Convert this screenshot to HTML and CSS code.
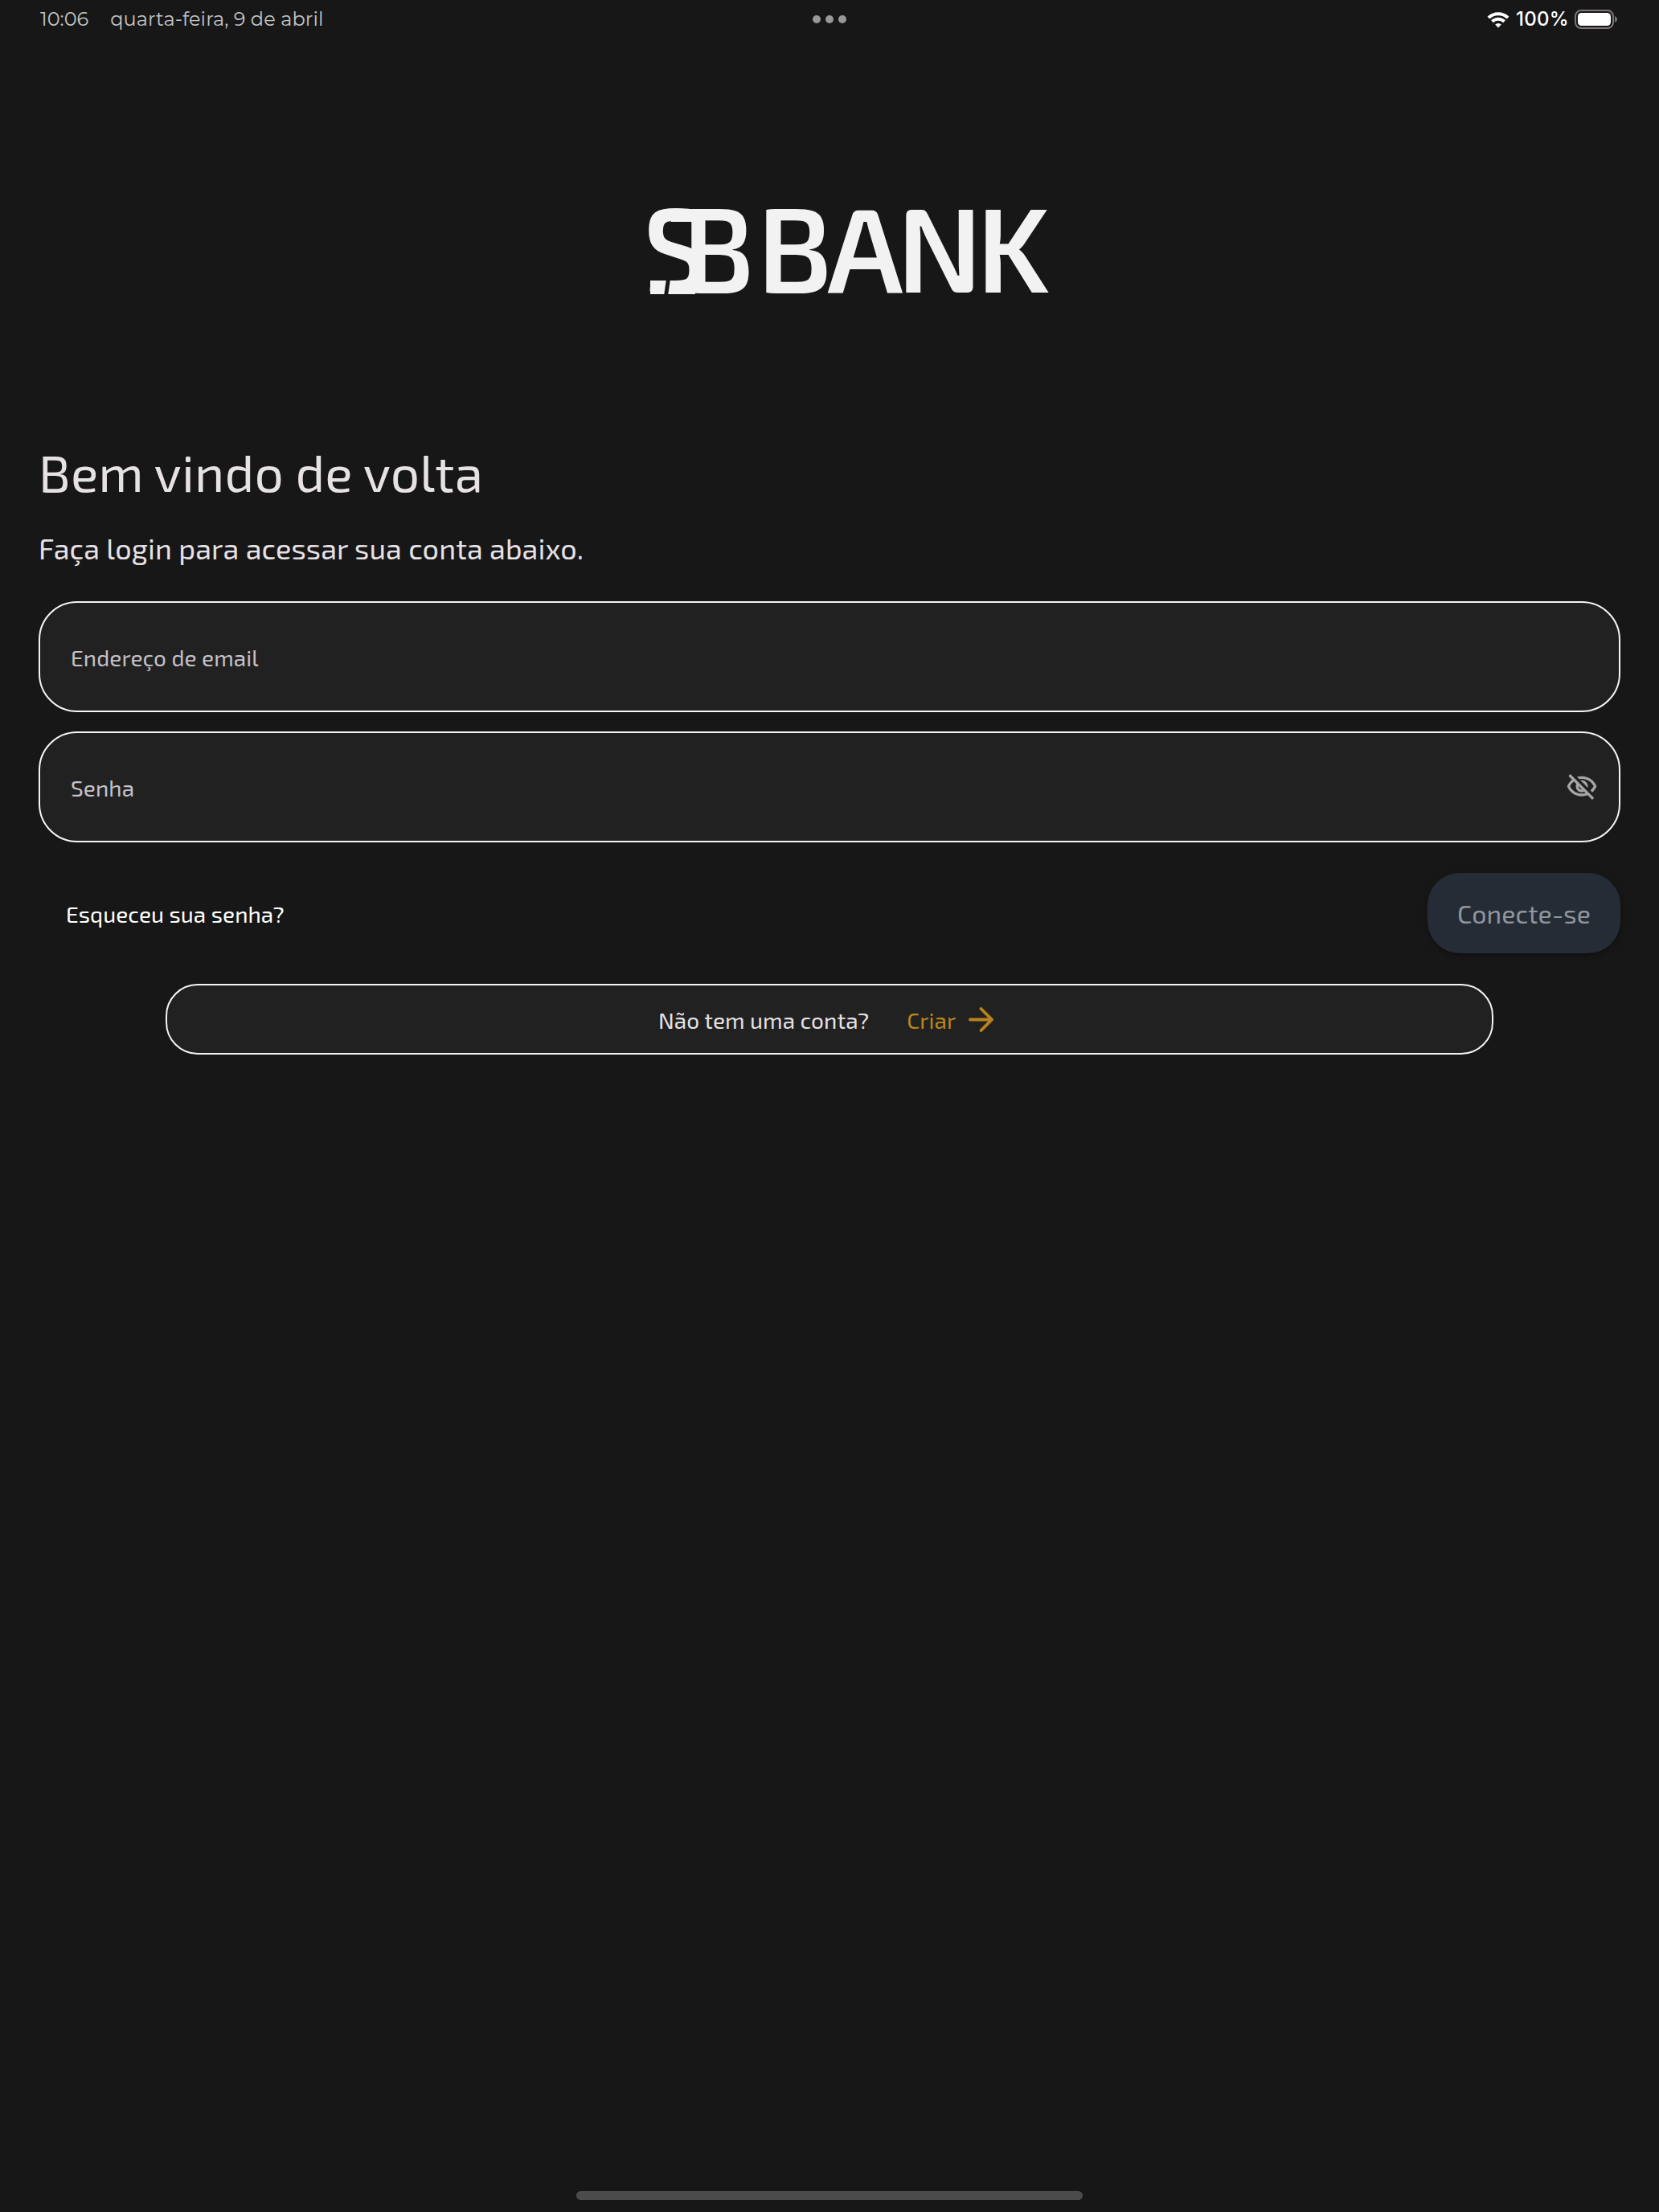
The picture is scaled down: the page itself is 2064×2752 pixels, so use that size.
FILE: index.html
```html
<!DOCTYPE html>
<html lang="pt-BR">
<head>
  <meta charset="utf-8">
  <meta name="viewport" content="width=device-width,initial-scale=1.0">
  <title>SB Bank</title>
  <link rel="stylesheet" href="styles.css">
</head>
<body>
  <header class="status-bar">
    <div class="status-left">
      <span class="time">10:06</span>
      <span class="date">quarta-feira, 9 de abril</span>
    </div>
    <div class="dots"><i></i><i></i><i></i></div>
    <div class="status-right">
      <svg class="wifi" width="28" height="21" viewBox="0 0 28 21" fill="none" stroke="#fff" stroke-width="4">
        <path d="M1.9 8.2a17.2 17.2 0 0 1 24.2 0" />
        <path d="M6.5 12.8a10.8 10.8 0 0 1 15 0" />
        <path d="M14 20.4l-3.8-3.9a5.4 5.4 0 0 1 7.6 0z" fill="#fff" stroke="none" />
      </svg>
      <span class="percent">100%</span>
      <svg width="54" height="24" viewBox="0 0 54 24">
        <rect x="1" y="1" width="47" height="22" rx="7" fill="none" stroke="#7d7474" stroke-width="2" />
        <rect x="4" y="4" width="41" height="16" rx="4.5" fill="#fff" />
        <path d="M50 8c4 1.500 4 6.500 0 8z" fill="#7d7474" />
      </svg>
    </div>
  </header>

  <main class="login">
    <svg class="logo" width="500" height="112" viewBox="806 258 500 112">
      <text class="logo-text" transform="translate(800.600 364) scale(.95 1)" x="0 51.500">SB</text>
      <!-- flat foot under the S, cut by a slash -->
      <rect class="foot" x="809" y="349" width="56" height="17" />
      <rect class="foot" x="835" y="260" width="40" height="16" />
      <path class="cut" d="M829 347h5l-3 21h-5z" />
      <text class="logo-text" x="942 1029 1116 1215" y="364">BANK</text>
    </svg>

    <h1>Bem vindo de volta</h1>
    <p class="subtitle">Faça login para acessar sua conta abaixo.</p>

    <form class="login-form">
      <div class="field">
        <input type="email" placeholder="Endereço de email">
      </div>
      <div class="field">
        <input type="password" placeholder="Senha">
        <svg class="eye" width="40" height="40" viewBox="0 0 24 24" fill="#a6a6a6">
          <path d="M12 6c3.790 0 7.170 2.130 8.820 5.500-.590 1.220-1.420 2.270-2.410 3.120l1.410 1.410c1.390-1.230 2.490-2.770 3.180-4.530C21.270 7.110 17 4 12 4c-1.270 0-2.490.2-3.640.57l1.650 1.650C10.660 6.090 11.320 6 12 6zm-1.070 1.140L13 9.210c.57.25 1.030.71 1.280 1.280l2.070 2.070c.08-.34.14-.7.14-1.070C16.500 9.010 14.480 7 12 7c-.37 0-.72.05-1.070.14zM2.010 3.870l2.680 2.680C3.060 7.830 1.770 9.530 1 11.500 2.730 15.890 7 19 12 19c1.520 0 2.980-.29 4.320-.82l3.420 3.420 1.410-1.410L3.420 2.450 2.010 3.870zm7.500 7.500l2.610 2.610c-.04.01-.08.02-.12.02-1.380 0-2.500-1.120-2.500-2.500 0-.05.01-.08.01-.13zm-3.400-3.400l1.750 1.750c-.23.55-.36 1.150-.36 1.780 0 2.480 2.020 4.500 4.500 4.500.63 0 1.230-.13 1.770-.36l.98.98c-.88.24-1.800.38-2.750.38-3.790 0-7.170-2.130-8.820-5.500.7-1.430 1.720-2.610 2.930-3.530z" />
        </svg>
      </div>
      <div class="actions">
        <a class="forgot">Esqueceu sua senha?</a>
        <button type="button" class="login-btn">Conecte-se</button>
      </div>
    </form>

    <div class="signup">
      <span class="question">Não tem uma conta?</span>
      <a class="create">Criar</a>
      <svg width="31" height="31" viewBox="0 0 31 31" fill="none" stroke="#b9831c" stroke-width="3.800" stroke-linecap="round" stroke-linejoin="round">
        <path d="M2 15.500h26.500M15.500 2l13.500 13.500L15.500 29" />
      </svg>
    </div>
  </main>

  <div class="home-bar"></div>
</body>
</html>
```
FILE: styles.css
```css
* {
  box-sizing: border-box;
}

body {
  margin: 0;
  min-height: 2752px;
  display: flex;
  flex-direction: column;
  background: #171717;
  color: #e6e1e5;
  font-family: "Exo 2", "Noto Sans", sans-serif;
}

.status-bar {
  display: grid;
  grid-template-columns: 1fr auto 1fr;
  align-items: center;
  height: 48px;
  padding: 0 51px 0 50px;
  font-family: "Montserrat", Inter, sans-serif;
  font-size: 24px;
  line-height: 46px;
  color: #c4c4c4;
}

.status-left {
  display: flex;
  gap: 27px;
  padding-bottom: 1px;
}

.date {
  letter-spacing: 0.1px;
}

.dots {
  display: flex;
  gap: 6px;
}

.dots i {
  width: 10px;
  height: 10px;
  border-radius: 50%;
  background: #989898;
}

.status-right {
  display: flex;
  justify-content: flex-end;
  align-items: center;
  color: #fff;
}

.percent {
  margin: 0 7px 0 8px;
  font-family: Inter, sans-serif;
  font-weight: 500;
  letter-spacing: 0.3px;
}

.login {
  display: flex;
  flex-direction: column;
  padding: 210px 48px 0;
}

.logo {
  margin-left: 758px;
  overflow: visible;
}

.logo-text {
  fill: #f2f2f2;
  font-size: 148px;
  font-weight: 600;
}

.foot {
  fill: #f2f2f2;
}

.cut {
  fill: #171717;
}

h1 {
  margin: 175px 0 29px;
  font-size: 64px;
  font-weight: 400;
  line-height: 84px;
  letter-spacing: 0.22px;
}

.subtitle {
  margin: 0 0 42px;
  font-size: 36px;
  line-height: 48px;
  letter-spacing: 0.12px;
}

.login-form {
  display: flex;
  flex-direction: column;
  gap: 24px;
}

.field {
  display: flex;
  align-items: center;
  height: 138px;
  padding: 0 26px 0 38px;
  background: #212121;
  border: 2px solid #f5f5f5;
  border-radius: 48px;
}

.field input {
  flex: 1;
  height: 100%;
  padding: 1px 0 0;
  background: none;
  border: none;
  outline: none;
  color: #e6e1e5;
  font: 28px "Exo 2", "Noto Sans", sans-serif;
  letter-spacing: 0.1px;
}

.field input::placeholder {
  color: #c5c1c8;
}

.actions {
  display: flex;
  justify-content: space-between;
  align-items: center;
  margin-top: 14px;
}

.forgot {
  padding: 1px 0 0 34px;
  color: #fff;
  font-size: 28px;
  letter-spacing: 0.1px;
}

.login-btn {
  width: 240px;
  height: 100px;
  padding: 0;
  border: none;
  border-radius: 40px;
  background: #262c35;
  color: #8f969f;
  font: 32px "Exo 2", "Noto Sans", sans-serif;
  letter-spacing: 0.1px;
  box-shadow: 0 3px 6px rgba(0, 0, 0, 0.35);
}

.signup {
  display: flex;
  align-items: center;
  width: 1652px;
  height: 88px;
  margin: 38px auto 0;
  padding-left: 611px;
  background: #212121;
  border: 2px solid #f5f5f5;
  border-radius: 40px;
  font-size: 28px;
}

.question {
  padding-top: 1px;
  letter-spacing: 0.1px;
}

.create {
  margin: 0 16px 0 47px;
  padding-top: 1px;
  color: #b9871c;
  letter-spacing: 0.1px;
}

.home-bar {
  width: 630px;
  height: 11px;
  margin: auto auto 15px;
  border-radius: 6px;
  background: #4b4b4b;
}
```
